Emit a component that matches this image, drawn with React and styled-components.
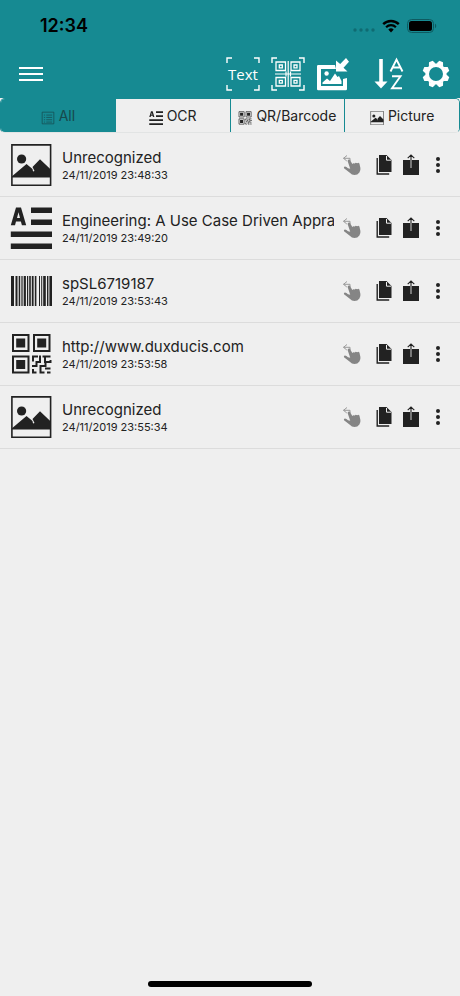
import React, { useState } from "react";
import styled, { createGlobalStyle } from "styled-components";

const TEAL = "#168a92";
const LIGHT = "#efefef";
const INK = "#222222";

const GlobalStyle = createGlobalStyle`
    * {
        box-sizing: border-box;
    }
    body {
        margin: 0;
        background-color: ${LIGHT};
        color: ${INK};
        font-family: Inter, "Liberation Sans", sans-serif;
    }
    button {
        display: flex;
        align-items: center;
        justify-content: center;
        padding: 0;
        border: none;
        background: none;
        color: inherit;
        font: inherit;
        cursor: pointer;
    }
    svg {
        display: block;
        flex-shrink: 0;
    }
`;

const Container = styled.div`
    display: flex;
    flex-direction: column;
    min-height: 100vh;
`;

const Header = styled.header`
    background-color: ${TEAL};
`;

const StatusBar = styled.div`
    display: flex;
    align-items: center;
    justify-content: space-between;
    height: 50px;
    padding: 2px 23px 0 40px;
    color: #000000;
`;

const Clock = styled.span`
    font-size: 18px;
    font-weight: 600;
    line-height: 20px;
`;

const StatusIcons = styled.div`
    display: flex;
    align-items: center;
    gap: 7px;
`;

const Toolbar = styled.nav`
    display: flex;
    align-items: center;
    justify-content: space-between;
    height: 48px;
    padding: 0 7px 0 18px;
    color: #ffffff;
`;

const Tools = styled.div`
    display: flex;
    align-items: center;
    gap: 11px;
`;

const ToolButton = styled.button`
    width: 34px;
    height: 34px;
    margin-left: ${(props) => (props.$spaced ? "13px" : "0")};
`;

const MenuButton = styled.button`
    width: 26px;
    height: 34px;
`;

const Tabs = styled.div`
    display: flex;
    height: 35px;
    border: 1px solid ${TEAL};
    border-bottom-color: #e2e4e4;
    border-radius: 5px;
    overflow: hidden;
`;

const Tab = styled.button`
    && {
        flex: 1 1 0;
        gap: 4px;
        font-size: 14px;
        line-height: 20px;
        color: ${(props) => (props.$active ? "#17484c" : INK)};
        background-color: ${(props) => (props.$active ? TEAL : LIGHT)};
    }
    & + & {
        border-left: 1px solid ${TEAL};
    }
    svg {
        margin-top: 4px;
    }
`;

const List = styled.ul`
    margin: 0;
    padding: 1px 0 0;
    list-style: none;
`;

const Row = styled.li`
    display: flex;
    align-items: center;
    height: 63px;
    padding: 0 9px 0 10px;
    border-bottom: 1px solid #dcdcdc;
`;

const Info = styled.div`
    flex: 1;
    min-width: 0;
    margin-left: 10px;
`;

const Title = styled.div`
    overflow: hidden;
    font-size: 15px;
    line-height: 20px;
    white-space: nowrap;
`;

const Stamp = styled.div`
    font-size: 11px;
    line-height: 14px;
`;

const Actions = styled.div`
    display: flex;
    align-items: center;
`;

const Action = styled.button`
    width: ${(props) => (props.$wide ? "36px" : "27px")};
    height: 30px;
`;

const Footer = styled.footer`
    display: flex;
    justify-content: center;
    margin-top: auto;
    padding-bottom: 9px;
`;

const HomeBar = styled.div`
    width: 164px;
    height: 6px;
    border-radius: 3px;
    background-color: #000000;
`;

const SignalDots = () => (
    <svg width="22" height="14" viewBox="0 0 22 14" fill="#0f6b72">
        {[2, 8, 14, 20].map((x) => (
            <circle key={x} cx={x} cy="11" r="1.7" />
        ))}
    </svg>
);

const Wifi = () => (
    <svg width="18" height="14" viewBox="0 0 18 14" fill="none" stroke="#000">
        <path d="M1.2 5.2a11 11 0 0 1 15.6 0" strokeWidth="2.4" />
        <path d="M4.1 8.2a7 7 0 0 1 9.8 0" strokeWidth="2.2" />
        <path d="M9 13.4l-2.7-2.8a4 4 0 0 1 5.4 0z" fill="#000" stroke="none" />
    </svg>
);

const Battery = () => (
    <svg width="30" height="14" viewBox="0 0 30 14">
        <rect x=".5" y=".5" width="26" height="13" rx="4" fill="none" stroke="#0e5a60" />
        <rect x="2" y="2" width="23" height="10" rx="2.5" />
        <path d="M28 4.8c1.6.6 1.6 3.8 0 4.4z" fill="#0e5a60" />
    </svg>
);

const MenuIcon = () => (
    <svg width="24" height="16" viewBox="0 0 24 16" fill="currentColor">
        <rect y="1" width="24" height="2" />
        <rect y="7" width="24" height="2" />
        <rect y="13" width="24" height="2" />
    </svg>
);

const corners = "M1 6V1h5M28 1h5v5M33 28v5h-5M6 33H1v-5";

const TextScanIcon = () => (
    <svg width="34" height="34" viewBox="0 0 34 34">
        <path d={corners} fill="none" stroke="currentColor" strokeWidth="1.4" />
        <text
            x="17"
            y="23"
            textAnchor="middle"
            fill="currentColor"
            fontFamily="'Open Sans', sans-serif"
            fontSize="15"
        >
            Text
        </text>
    </svg>
);

const QrScanIcon = () => (
    <svg width="34" height="34" viewBox="0 0 34 34" fill="none" stroke="currentColor">
        <path d={corners} strokeWidth="1.4" />
        <path
            d="M5 5h9.500v8.500H5zM20 5h9v8.500h-9zM5 20.500h9.500V29H5zM20 20.500h9V29h-9z"
            strokeWidth="1.3"
        />
        <path
            d="M8.300 8h3v2.800h-3zM23 8h3v2.800h-3zM8.300 23.300h3v2.800h-3zM23 23.300h3v2.800h-3z"
            strokeWidth="1.3"
        />
        <path d="M17.200 4v26M4 17h26M15 14.500v5M19.500 14.500v5" strokeWidth="1.2" />
    </svg>
);

const ImportIcon = () => (
    <svg width="34" height="34" viewBox="0 0 34 34" fill="currentColor">
        <path d="M1 9.200Q1 8 2.200 8H19l1 4H5v17h22v-7l4-1v11q0 1.200-1.200 1.200H2.200Q1 33.200 1 32z" />
        <circle cx="10.600" cy="16.500" r="2.200" />
        <path d="M6.500 27v-1.500l4.500-4 3 2.500 5-7.500 2.500 3.500 1.500-1 2.500 5v3z" />
        <path d="M20 3.500v11h11.500l-4-3.800 5.500-6L30 1l-5.800 6z" />
    </svg>
);

const SortIcon = () => (
    <svg width="34" height="34" viewBox="0 0 34 34" fill="none" stroke="currentColor">
        <path d="M7 2v25" strokeWidth="3.600" />
        <path d="M.500 24.500h13L7 31.500z" fill="currentColor" stroke="none" />
        <path d="M16.500 14.500l6-12 6 12M18.500 10.500h8M18 19.200h8.500L18 31.300h10" strokeWidth="1.900" />
    </svg>
);

const teeth = [0, 45, 90, 135, 180, 225, 270, 315];

const GearIcon = () => (
    <svg width="28" height="28" viewBox="-14 -14 28 28" fill="currentColor">
        <circle r="8.800" fill="none" stroke="currentColor" strokeWidth="3.600" />
        {teeth.map((angle) => (
            <path
                key={angle}
                d="M-3.600-9.800L-2-13.500H2L3.600-9.800z"
                transform={`rotate(${angle + 22.5})`}
            />
        ))}
    </svg>
);

const ListIcon = ({ size }) => (
    <svg width={size} height={size} viewBox="0 0 24 24" fill="none" stroke="currentColor">
        <path d="M2 2h20v20H2z" strokeWidth="1.200" />
        <path d="M5 7h2M9 7h10M5 11h2M9 11h10M5 15h2M9 15h10M5 19h2M9 19h10" strokeWidth="1.200" />
    </svg>
);

const PictureIcon = ({ size }) => (
    <svg width={size} height={size} viewBox="0 0 42 42" fill="currentColor">
        <path d="M1.900.900h38.700v40.500H1.900z" fill="none" stroke="currentColor" strokeWidth="1.600" />
        <circle cx="11.600" cy="15" r="4.600" />
        <path d="M2 33.500v-1.200L16.500 20l6 5 .5 2.500 1.500-.5L22.500 23 30 15.200l10.500 10v8.300z" />
    </svg>
);

const OcrIcon = ({ size }) => (
    <svg width={size} height={size} viewBox="0 0 42 42" fill="currentColor">
        <path
            fillRule="evenodd"
            d="M.800 18.200L6 .500h5L16.200 18.200h-4.300l-1-3.600H6l-1 3.600zM7 11h3L8.500 5.300z"
        />
        <path d="M21 .500h21v5.600H21zM21 12.400h21V18H21zM.800 24.500H42v5.600H.800zM.800 36.400H42V42H.800z" />
    </svg>
);

const bars = [
    [1, 3],
    [5.5, 2],
    [8.7, 1.5],
    [11.4, 1.2],
    [13.7, 2.2],
    [17, 1.2],
    [19.2, 1.6],
    [21.8, 1.8],
    [24.8, 1.6],
    [29, 1],
    [31.2, 1],
    [33.2, 2.6],
    [37, 1.4],
    [39.4, 2.6],
];

const BarcodeIcon = ({ size }) => (
    <svg width={size} height={size} viewBox="0 0 42 42" fill="currentColor">
        {bars.map(([x, width]) => (
            <rect key={x} x={x} y="6" width={width} height="30" />
        ))}
    </svg>
);

const QrIcon = ({ size }) => (
    <svg width={size} height={size} viewBox="0 0 42 42" fill="none" stroke="currentColor">
        <path
            d="M3 2h15.500v16H3zM24 2h15.500v16H24zM3 23.500h15.500v16H3z"
            strokeWidth="2"
        />
        <path
            d="M6.200 5.500h9v9h-9zM27.200 5.500h9v9h-9zM6.200 27h9v9h-9z"
            fill="currentColor"
            stroke="none"
        />
        <path
            d="M23 28.500V23.500h5M30 22.500v6.500h-3.500v4H22M32.500 23.500h8M35 24v5h5.500v-2M30 33h5.500v-3M23 36v3.500h3.500M30.500 32v7.500h4M35 35.500h5.500M37 39.500h3.500"
            strokeWidth="2"
        />
    </svg>
);

const HandIcon = () => (
    <svg width="20" height="22" viewBox="0 0 20 22">
        <path
            d="M5 1.500L1.500 4.300l3.300 2.700M1.500 4.300H8V7"
            fill="none"
            stroke="#9a9a9a"
            strokeWidth="1"
        />
        <path
            d="M6.200 5.800q1-.8 1.800.3l2.300 4 1-.8 1.400.2 1-.7 1.500.4 1.200-.5 1 .8 1 4.500q.4 2.700-1 4.500-1.800 2.500-4.900 2.500-2.800 0-4.700-2.300L2 14.200q-.6-1.400 1-1.600 1.300.1 3 1.700l2.200.5L5.700 7.200q-.2-.8.500-1.400z"
            fill="#858585"
        />
    </svg>
);

const CopyIcon = () => (
    <svg width="16" height="22" viewBox="0 0 16 22" fill="currentColor">
        <path d="M3 1h7.500L15.500 6v12H3z" />
        <path d="M10.500 2v4.200H15" fill="none" stroke={LIGHT} strokeWidth="1" />
        <path d="M1.200 4v16h12" fill="none" stroke="currentColor" strokeWidth="1.400" />
    </svg>
);

const ShareIcon = () => (
    <svg width="18" height="22" viewBox="0 0 18 22">
        <path d="M1 6h16v15H1z" fill="currentColor" />
        <path d="M9 6v8" stroke="#b5b5b5" strokeWidth="1.2" />
        <path d="M9 1v5M5.700 4.200L9 1l3.300 3.200" fill="none" stroke="currentColor" strokeWidth="1.1" />
    </svg>
);

const DotsIcon = () => (
    <svg width="4" height="18" viewBox="0 0 4 18" fill="currentColor">
        <circle cx="2" cy="3" r="2" />
        <circle cx="2" cy="9" r="2" />
        <circle cx="2" cy="15" r="2" />
    </svg>
);

const tabs = [
    { name: "All", Icon: ListIcon },
    { name: "OCR", Icon: OcrIcon },
    { name: "QR/Barcode", Icon: QrIcon },
    { name: "Picture", Icon: PictureIcon },
];

const scans = [
    { title: "Unrecognized", stamp: "24/11/2019 23:48:33", Icon: PictureIcon },
    {
        title: "Engineering: A Use Case Driven Appra",
        stamp: "24/11/2019 23:49:20",
        Icon: OcrIcon,
    },
    { title: "spSL6719187", stamp: "24/11/2019 23:53:43", Icon: BarcodeIcon },
    { title: "http://www.duxducis.com", stamp: "24/11/2019 23:53:58", Icon: QrIcon },
    { title: "Unrecognized", stamp: "24/11/2019 23:55:34", Icon: PictureIcon },
];

const ScanRow = ({ title, stamp, Icon }) => (
    <Row>
        <Icon size={42} />
        <Info>
            <Title>{title}</Title>
            <Stamp>{stamp}</Stamp>
        </Info>
        <Actions>
            <Action $wide aria-label="Swipe">
                <HandIcon />
            </Action>
            <Action aria-label="Copy">
                <CopyIcon />
            </Action>
            <Action aria-label="Share">
                <ShareIcon />
            </Action>
            <Action aria-label="More">
                <DotsIcon />
            </Action>
        </Actions>
    </Row>
);

const App = () => {
    const [active, setActive] = useState("All");

    return (
        <Container>
            <GlobalStyle />
            <Header>
                <StatusBar>
                    <Clock>12:34</Clock>
                    <StatusIcons>
                        <SignalDots />
                        <Wifi />
                        <Battery />
                    </StatusIcons>
                </StatusBar>
                <Toolbar>
                    <MenuButton aria-label="Menu">
                        <MenuIcon />
                    </MenuButton>
                    <Tools>
                        <ToolButton aria-label="Scan text">
                            <TextScanIcon />
                        </ToolButton>
                        <ToolButton aria-label="Scan QR code">
                            <QrScanIcon />
                        </ToolButton>
                        <ToolButton aria-label="Import picture">
                            <ImportIcon />
                        </ToolButton>
                        <ToolButton $spaced aria-label="Sort">
                            <SortIcon />
                        </ToolButton>
                        <ToolButton aria-label="Settings">
                            <GearIcon />
                        </ToolButton>
                    </Tools>
                </Toolbar>
            </Header>
            <Tabs>
                {tabs.map(({ name, Icon }) => (
                    <Tab
                        key={name}
                        $active={name === active}
                        aria-pressed={name === active}
                        onClick={() => setActive(name)}
                    >
                        <Icon size={14} />
                        {name}
                    </Tab>
                ))}
            </Tabs>
            <List>
                {scans.map((scan) => (
                    <ScanRow key={scan.stamp} {...scan} />
                ))}
            </List>
            <Footer>
                <HomeBar />
            </Footer>
        </Container>
    );
};

export default App;
